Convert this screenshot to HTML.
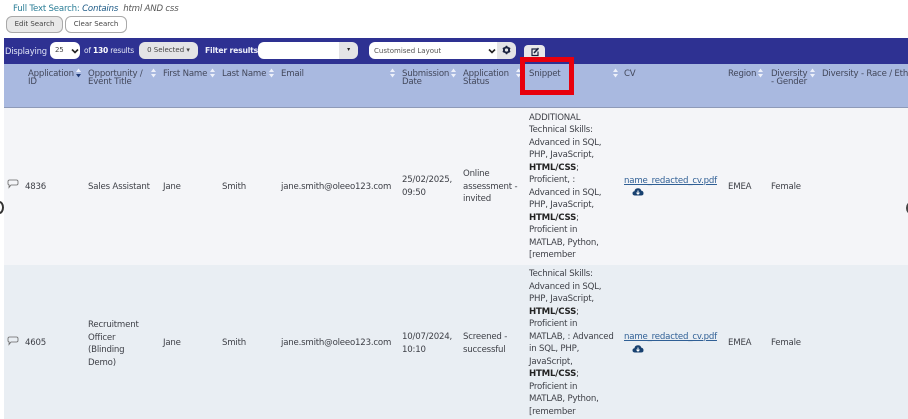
<!DOCTYPE html>
<html><head><meta charset="utf-8"><style>
html,body{margin:0;padding:0;width:908px;height:419px;overflow:hidden;background:#fff}
body{position:relative;font-family:"DejaVu Sans",sans-serif;font-size:8.6px;color:#3d3f46;letter-spacing:-.2px}
.a{position:absolute;white-space:nowrap}
.h{line-height:8.5px;color:#42475a}
.s{line-height:12.5px}
.btn{position:absolute;box-sizing:border-box;border:1px solid #a9a9a9;border-radius:6px;height:17px;line-height:14px;text-align:center;font-size:7px;color:#444;letter-spacing:0}
b{font-weight:700;color:#222}
</style></head><body>
<div class="a" style="left:13px;top:4px;font-size:8.6px;color:#2a7d96">Full Text Search: <i style="color:#1d5a86">Contains</i> &nbsp;<i style="color:#555">html AND css</i></div>
<div class="btn" style="left:6px;top:16px;width:57px;background:#e9e9e9">Edit Search</div>
<div class="btn" style="left:65px;top:16px;width:62px;background:#fff">Clear Search</div>

<div class="a" style="left:4px;top:38px;width:904px;height:26px;background:#2e3192"></div>
<div class="a" style="left:5px;top:45.5px;color:#dfe3f5;font-size:8.4px">Displaying</div>
<div class="a" style="left:50px;top:42px;width:30px;height:17px;background:#fff;border-radius:6px;font-size:7px;line-height:17px;text-indent:5px;color:#444">25</div>
<svg class="a" style="left:71px;top:48px" width="8" height="6"><path d="M1 1.5L4 4.5L7 1.5" fill="none" stroke="#222" stroke-width="1.6"/></svg>
<div class="a" style="left:84px;top:46px;color:#e4e7f6;font-size:7.5px">of <b style="color:#fff">130</b> results</div>
<div class="a" style="left:139px;top:42px;width:59px;height:17px;background:#e4e4e6;border-radius:6px;font-size:7px;line-height:17px;text-align:center;color:#444;letter-spacing:0">0 Selected ▾</div>
<div class="a" style="left:205px;top:46px;color:#eef0fa;font-size:7.7px;font-weight:700">Filter results</div>
<div class="a" style="left:258px;top:42px;width:81px;height:17px;background:#fff;border-radius:6px 0 0 6px"></div>
<div class="a" style="left:339px;top:42px;width:19px;height:17px;background:#e4e4e6;border-radius:0 6px 6px 0;font-size:6px;line-height:16px;text-align:center;color:#222">▾</div>
<div class="a" style="left:369px;top:42px;width:128px;height:17px;background:#fff;border-radius:6px 0 0 6px;font-size:7px;line-height:18px;text-indent:5px;color:#555;letter-spacing:0">Customised Layout</div>
<svg class="a" style="left:488px;top:48px" width="8" height="6"><path d="M1 1.5L4 4.5L7 1.5" fill="none" stroke="#222" stroke-width="1.6"/></svg>
<div class="a" style="left:497px;top:42px;width:19px;height:17px;background:#e4e4e6;border-radius:0 6px 6px 0"></div>
<svg class="a" style="left:502px;top:45px" width="9" height="10" viewBox="0 0 9 10"><circle cx="4.5" cy="5" r="2.6" fill="none" stroke="#1a2340" stroke-width="2"/><path d="M4.5 .8V2M4.5 8V9.2M.8 3L1.9 3.6M7.1 6.4L8.2 7M.8 7L1.9 6.4M7.1 3.6L8.2 3" stroke="#1a2340" stroke-width="1.5"/></svg>
<div class="a" style="left:524px;top:45px;width:21px;height:14px;background:#e8e8ea;border-radius:4px 4px 0 0"></div>
<svg class="a" style="left:530px;top:47px" width="10" height="10" viewBox="0 0 10 10"><path d="M7 2H2V8.5H8V4.5" fill="none" stroke="#1a2340" stroke-width="1.2"/><path d="M4 6L8.5 1.2" stroke="#1a2340" stroke-width="1.6"/></svg>

<div class="a" style="left:4px;top:64px;width:904px;height:44px;background:#a9b9e0;border-bottom:1px solid #8e9ab8;box-sizing:border-box"></div>
<div class="a" style="left:4px;top:108px;width:904px;height:157px;background:#f4f5f8"></div>
<div class="a" style="left:4px;top:265px;width:904px;height:154px;background:#e9eef3"></div>

<div class="a h" style="left:28px;top:69.5px">Application<br>ID</div>
<div class="a h" style="left:88px;top:69.5px">Opportunity /<br>Event Title</div>
<div class="a h" style="left:163px;top:69.5px">First Name</div>
<div class="a h" style="left:222px;top:69.5px">Last Name</div>
<div class="a h" style="left:281px;top:69.5px">Email</div>
<div class="a h" style="left:402px;top:69.5px">Submission<br>Date</div>
<div class="a h" style="left:463px;top:69.5px">Application<br>Status</div>
<div class="a h" style="left:529px;top:69.5px">Snippet</div>
<div class="a h" style="left:624px;top:69.5px">CV</div>
<div class="a h" style="left:728px;top:69.5px">Region</div>
<div class="a h" style="left:771px;top:69.5px">Diversity<br>- Gender</div>
<div class="a h" style="left:822px;top:69.5px">Diversity - Race / Ethn</div>

<svg class="a" style="left:0;top:0" width="908" height="110">
<defs><g id="q"><path d="M0 4L2.5 0.5L5 4ZM0 6L2.5 9.5L5 6Z" fill="#eef1fa"/></g></defs>
<use href="#q" x="76" y="68"/><path d="M76 74L78.5 77.5L81 74Z" fill="#1f3a78"/>
<use href="#q" x="151" y="68"/><use href="#q" x="210" y="68"/><use href="#q" x="269" y="68"/>
<use href="#q" x="390" y="68"/><use href="#q" x="451" y="68"/><use href="#q" x="516" y="68"/>
<use href="#q" x="613" y="68"/><use href="#q" x="758" y="68"/><use href="#q" x="810" y="68"/>
</svg>
<div class="a" style="left:520px;top:57px;box-sizing:border-box;width:54px;height:38px;border:5px solid #e8000c"></div>

<svg class="a" style="left:7px;top:179px" width="12" height="11" viewBox="0 0 12 11"><path d="M2.5 1H9.5Q11 1 11 2.5V4.5Q11 6 9.5 6H4L2 8.5L2.2 6Q1 6 1 4.5V2.5Q1 1 2.5 1Z" fill="none" stroke="#666" stroke-width=".8"/></svg>
<div class="a" style="left:25px;top:182px">4836</div>
<div class="a" style="left:88px;top:182px">Sales Assistant</div>
<div class="a" style="left:163px;top:182px">Jane</div>
<div class="a" style="left:222px;top:182px">Smith</div>
<div class="a" style="left:281px;top:182px">jane.smith@oleeo123.com</div>
<div class="a" style="left:402px;top:174px;line-height:13px">25/02/2025,<br>09:50</div>
<div class="a" style="left:463px;top:168px;line-height:12.5px">Online<br>assessment -<br>invited</div>
<div class="a s" style="left:529px;top:111.5px">ADDITIONAL<br>Technical Skills:<br>Advanced in SQL,<br>PHP, JavaScript,<br><b>HTML/CSS</b>;<br>Proficient, :<br>Advanced in SQL,<br>PHP, JavaScript,<br><b>HTML/CSS</b>;<br>Proficient in<br>MATLAB, Python,<br>[remember</div>
<div class="a" style="left:624px;top:176px;color:#2f5f95;text-decoration:underline">name_redacted_cv.pdf</div>
<svg class="a" style="left:632px;top:187px" width="12" height="10" viewBox="0 0 12 10"><path d="M3 8.5Q.5 8.5 .5 6.3Q.5 4.5 2.4 4.2Q3 1.2 6 1.2Q8.7 1.2 9.4 3.8Q11.5 4.2 11.5 6.2Q11.5 8.5 9 8.5Z" fill="#17406f"/><path d="M6 3.5V7M4.5 5.6L6 7.2L7.5 5.6" stroke="#fff" fill="none" stroke-width="1"/></svg>
<div class="a" style="left:728px;top:182px">EMEA</div>
<div class="a" style="left:771px;top:182px">Female</div>

<svg class="a" style="left:7px;top:336px" width="12" height="11" viewBox="0 0 12 11"><path d="M2.5 1H9.5Q11 1 11 2.5V4.5Q11 6 9.5 6H4L2 8.5L2.2 6Q1 6 1 4.5V2.5Q1 1 2.5 1Z" fill="none" stroke="#666" stroke-width=".8"/></svg>
<div class="a" style="left:25px;top:338px">4605</div>
<div class="a" style="left:88px;top:319px;line-height:12.6px">Recruitment<br>Officer<br>(Blinding<br>Demo)</div>
<div class="a" style="left:163px;top:338px">Jane</div>
<div class="a" style="left:222px;top:338px">Smith</div>
<div class="a" style="left:281px;top:338px">jane.smith@oleeo123.com</div>
<div class="a" style="left:402px;top:331px;line-height:12.5px">10/07/2024,<br>10:10</div>
<div class="a" style="left:463px;top:331px;line-height:12.5px">Screened -<br>successful</div>
<div class="a s" style="left:529px;top:268px">Technical Skills:<br>Advanced in SQL,<br>PHP, JavaScript,<br><b>HTML/CSS</b>;<br>Proficient in<br>MATLAB, : Advanced<br>in SQL, PHP,<br>JavaScript,<br><b>HTML/CSS</b>;<br>Proficient in<br>MATLAB, Python,<br>[remember</div>
<div class="a" style="left:624px;top:332px;color:#2f5f95;text-decoration:underline">name_redacted_cv.pdf</div>
<svg class="a" style="left:632px;top:344px" width="12" height="10" viewBox="0 0 12 10"><path d="M3 8.5Q.5 8.5 .5 6.3Q.5 4.5 2.4 4.2Q3 1.2 6 1.2Q8.7 1.2 9.4 3.8Q11.5 4.2 11.5 6.2Q11.5 8.5 9 8.5Z" fill="#17406f"/><path d="M6 3.5V7M4.5 5.6L6 7.2L7.5 5.6" stroke="#fff" fill="none" stroke-width="1"/></svg>
<div class="a" style="left:728px;top:338px">EMEA</div>
<div class="a" style="left:771px;top:338px">Female</div>

<div class="a" style="left:-5px;top:201px;width:9px;height:13px;box-sizing:border-box;border:2px solid #333;border-radius:50%"></div>
<div class="a" style="left:906px;top:202px;width:9px;height:12px;box-sizing:border-box;border:2px solid #444;border-radius:50%"></div>
</body></html>
